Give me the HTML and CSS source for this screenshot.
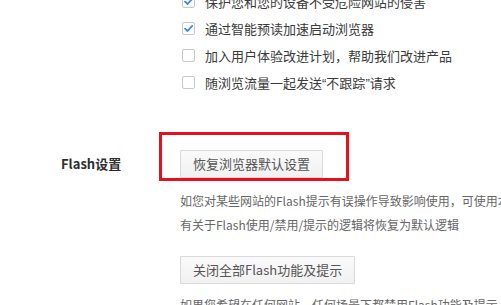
FILE: index.html
```html
<!DOCTYPE html>
<html lang="zh-CN">
<head>
<meta charset="utf-8">
<link rel="stylesheet" href="styles.css">
</head>
<body>
<div class="page">
  <div class="options">
    <label class="opt"><span class="cb checked"><svg viewBox="0 0 13 13" width="13" height="13"><path d="M3 6.6 L5.6 9 L10.2 3.8" fill="none" stroke="#3b8be0" stroke-width="1.8" stroke-linecap="round" stroke-linejoin="round"/></svg></span><span class="txt">保护您和您的设备不受危险网站的侵害</span></label>
    <label class="opt"><span class="cb checked"><svg viewBox="0 0 13 13" width="13" height="13"><path d="M3 6.6 L5.6 9 L10.2 3.8" fill="none" stroke="#3b8be0" stroke-width="1.8" stroke-linecap="round" stroke-linejoin="round"/></svg></span><span class="txt">通过智能预读加速启动浏览器</span></label>
    <label class="opt"><span class="cb"></span><span class="txt">加入用户体验改进计划，帮助我们改进产品</span></label>
    <label class="opt"><span class="cb"></span><span class="txt">随浏览流量一起发送<span class="q">“</span>不跟踪<span class="q">”</span>请求</span></label>
  </div>
  <div class="section">
    <div class="label">Flash设置</div>
    <div class="content">
      <div class="btn-wrap">
        <button class="btn">恢复浏览器默认设置</button>
        <div class="highlight"></div>
      </div>
      <p class="desc first">如您对某些网站的Flash提示有误操作导致影响使用，可使用本功能，所</p>
      <p class="desc">有关于Flash使用/禁用/提示的逻辑将恢复为默认逻辑</p>
      <button class="btn second">关闭全部Flash功能及提示</button>
      <p class="desc third">如果您希望在任何网站、任何场景下都禁用Flash功能及提示</p>
    </div>
  </div>
</div>
</body>
</html>
```

FILE: styles.css
```css
html, body {
  margin: 0;
  padding: 0;
  background: #fff;
  overflow: hidden;
}
body {
  width: 501px;
  height: 305px;
  font-family: "Noto Sans CJK SC", "Microsoft YaHei", sans-serif;
  color: #333;
}
.page {
  margin-top: -12px;
}
.options {
  display: flex;
  flex-direction: column;
  padding-left: 182px;
}
.opt {
  display: flex;
  align-items: center;
  height: 27px;
  gap: 10px;
  font-size: 13px;
  color: #3a3a3a;
  white-space: nowrap;
}
.q {
  font-family: "Liberation Sans", sans-serif;
}
.cb {
  width: 13px;
  height: 13px;
  box-sizing: border-box;
  border: 1px solid #c8c8c8;
  border-radius: 2px;
  background: #fff;
  display: flex;
  align-items: center;
  justify-content: center;
  flex: none;
}
.cb svg {
  display: block;
  margin: -1px;
}
.section {
  display: flex;
  margin-top: 54px;
}
.label {
  width: 119px;
  padding-left: 61px;
  box-sizing: content-box;
  font-size: 13px;
  font-weight: bold;
  color: #2e2e2e;
  line-height: 28px;
  height: 28px;
  white-space: nowrap;
}
.content {
  flex: 1;
  min-width: 0;
  display: flex;
  flex-direction: column;
  align-items: flex-start;
}
.btn-wrap {
  position: relative;
}
.btn {
  height: 28px;
  padding: 0 12px;
  border: 1px solid #dadada;
  border-radius: 1px;
  background: linear-gradient(#fafafa, #f1f1f1);
  font-family: inherit;
  font-size: 13px;
  color: #555;
  line-height: 26px;
  white-space: nowrap;
  display: block;
}
.highlight {
  position: absolute;
  left: -21px;
  top: -18px;
  width: 190px;
  height: 49px;
  box-sizing: border-box;
  border: 3px solid #e8111b;
}
.desc {
  margin: 0;
  font-size: 12px;
  line-height: 24px;
  color: #666;
  white-space: nowrap;
}
.desc.first {
  margin-top: 11px;
}
.second {
  margin-top: 19px;
}
.desc.third {
  margin-top: 9px;
}
```
